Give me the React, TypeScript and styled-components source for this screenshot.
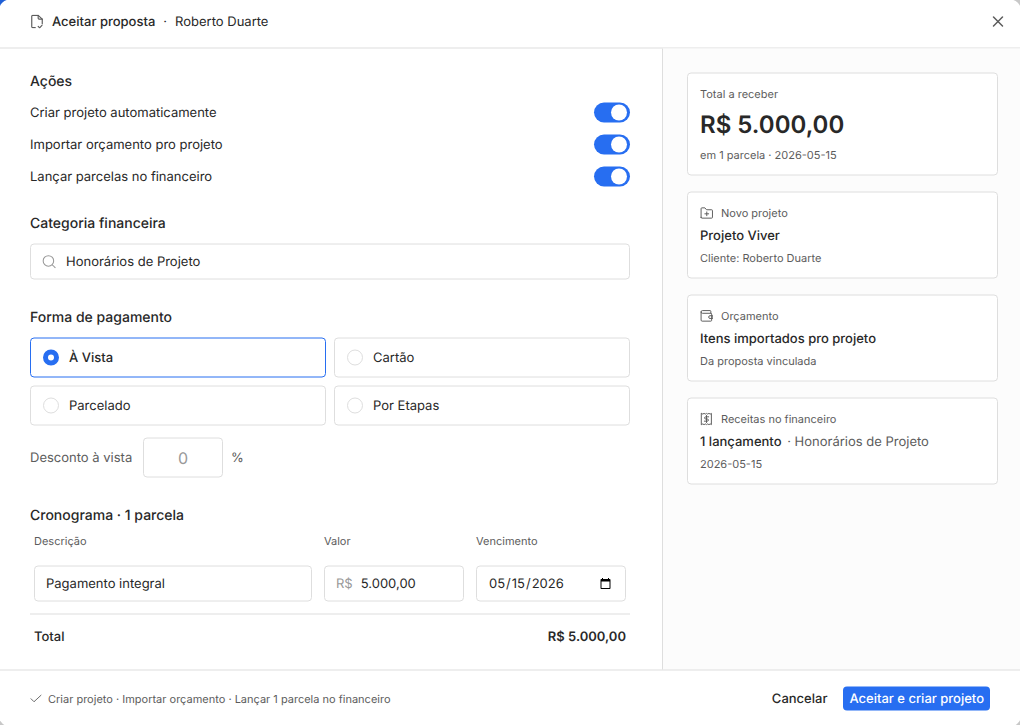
import React, { useState } from "react";
import styled, { createGlobalStyle } from "styled-components";

const color = {
  text: "#282828",
  muted: "#5c5c5c",
  faint: "#999999",
  line: "#dedede",
  panel: "#fcfcfc",
  accent: "#276ef1",
};

const GlobalStyle = createGlobalStyle`
  *, *::before, *::after { box-sizing: border-box; }
  body {
    margin: 0;
    background: #cccccc;
    color: ${color.text};
    font-family: Inter, "Liberation Sans", sans-serif;
    font-size: 13px;
    line-height: 20px;
    text-rendering: geometricPrecision;
  }
  h1, h2, p { margin: 0; font: inherit; }
  button, input { font: inherit; color: inherit; text-rendering: inherit; }
`;

const Backdrop = styled.div`
  position: fixed;
  inset: 0;
  background: linear-gradient(135deg, #1f5fd6 0 24px, #c8c8c8 24px);
`;

const Dialog = styled.form`
  position: fixed;
  top: 50%;
  left: 50%;
  transform: translate(-50%, -50%);
  width: 100vw;
  height: 100vh;
  display: flex;
  flex-direction: column;
  overflow: hidden;
  background: #ffffff;
  border-radius: 10px;
  box-shadow: 0 0 0 1px #ffffff;
`;

const Header = styled.header`
  flex: none;
  display: flex;
  align-items: center;
  gap: 8px;
  height: 48px;
  padding: 0 9px 4px 30px;
  border-bottom: 1px solid ${color.line};
`;

const Title = styled.h1`
  font-weight: 500;
`;

const CloseButton = styled.button`
  display: flex;
  margin-left: auto;
  padding: 4px;
  border: 0;
  background: none;
  color: ${color.muted};
  cursor: pointer;
`;

const Body = styled.div`
  flex: 1;
  min-height: 0;
  display: grid;
  grid-template-columns: minmax(0, 1fr) 358px;
`;

const Main = styled.main`
  padding: 22px 32px 8px 30px;
  overflow: auto;
`;

const Section = styled.section<{ $gap: number }>`
  margin-bottom: ${(p) => p.$gap}px;
`;

const Heading = styled.h2<{ $gap?: number }>`
  display: block;
  margin-bottom: ${(p) => p.$gap ?? 0}px;
  font-size: 14px;
  font-weight: 500;
  line-height: 22px;
`;

const SwitchRow = styled.label`
  display: flex;
  align-items: center;
  justify-content: space-between;
  height: 32px;
  cursor: pointer;
`;

const Switch = styled.input`
  appearance: none;
  width: 36px;
  height: 20px;
  margin: 0;
  padding: 2px;
  border-radius: 10px;
  background: #d0d0d0;
  cursor: pointer;

  &::before {
    content: "";
    display: block;
    width: 16px;
    height: 16px;
    border-radius: 50%;
    background: #ffffff;
  }
  &:checked { background: ${color.accent}; }
  &:checked::before { margin-left: 15px; }
`;

const Field = styled.div`
  display: flex;
  align-items: center;
  height: 36px;
  padding: 0 11px;
  border: 1px solid ${color.line};
  border-radius: 4px;
  color: ${color.faint};
`;

const FieldInput = styled.input<{ $indent?: number }>`
  flex: 1;
  min-width: 0;
  margin: 0 0 0 ${(p) => p.$indent ?? 0}px;
  padding: 0;
  border: 0;
  outline: 0;
  background: none;
  color: ${color.text};
`;

const Options = styled.div`
  display: grid;
  grid-template-columns: 1fr 1fr;
  gap: 8px;
`;

const Option = styled.label`
  display: flex;
  align-items: center;
  gap: 10px;
  height: 40px;
  padding: 0 12px;
  border: 1px solid ${color.line};
  border-radius: 4px;
  cursor: pointer;

  &:has(input:checked) {
    border-color: ${color.accent};
    font-weight: 500;
  }
`;

const Radio = styled.input`
  appearance: none;
  width: 16px;
  height: 16px;
  margin: 0;
  border: 1px solid ${color.line};
  border-radius: 50%;
  background: #ffffff;

  &:checked { border: 5px solid ${color.accent}; }
`;

const Discount = styled.div`
  display: flex;
  align-items: center;
  gap: 8px;
  margin-top: 12px;
  color: ${color.muted};
`;

const DiscountLabel = styled.label`
  min-width: 105px;
`;

const DiscountInput = styled.input`
  width: 80px;
  height: 40px;
  padding: 0 8px;
  border: 1px solid ${color.line};
  border-radius: 4px;
  font-size: 16px;
  text-align: center;

  &::placeholder { color: ${color.faint}; }
`;

const Schedule = styled.table`
  width: 100%;
  table-layout: fixed;
  border-collapse: collapse;

  th, td {
    padding: 0 12px 0 0;
    text-align: left;
  }
  th:first-child, td:first-child { padding-left: 4px; }
  th:last-child, td:last-child { padding-right: 4px; }
  thead th {
    height: 28px;
    color: ${color.muted};
    font-size: 11px;
    font-weight: 400;
  }
  tbody td { height: 60px; }
  tfoot tr { border-top: 1px solid ${color.line}; }
  tfoot th { height: 44px; font-weight: 500; }
  tfoot td { font-weight: 600; text-align: right; }
`;

const Column = styled.col<{ $width?: number }>`
  width: ${(p) => (p.$width ? `${p.$width}px` : "auto")};
`;

const Aside = styled.aside`
  display: flex;
  flex-direction: column;
  gap: 16px;
  padding: 24px 22px 24px 24px;
  border-left: 1px solid ${color.line};
  background: ${color.panel};
  overflow: auto;
`;

const Card = styled.section`
  padding: 12px;
  border: 1px solid ${color.line};
  border-radius: 4px;
  background: #ffffff;
`;

const CardLabel = styled.h2`
  display: flex;
  align-items: center;
  gap: 8px;
  height: 17px;
  color: ${color.muted};
  font-size: 11px;
`;

const Amount = styled.p`
  padding: 4px 0;
  font-size: 24px;
  font-weight: 600;
  line-height: 36px;
`;

const CardValue = styled.p`
  padding: 4px 0;
  color: ${color.muted};

  strong {
    margin-right: 2px;
    color: ${color.text};
    font-weight: 500;
  }
`;

const CardNote = styled.p`
  color: ${color.muted};
  font-size: 11px;
  line-height: 16px;
`;

const Footer = styled.footer`
  flex: none;
  display: flex;
  align-items: center;
  gap: 4px;
  height: 56px;
  padding: 2px 30px 0;
  border-top: 1px solid ${color.line};
`;

const Summary = styled.p`
  display: flex;
  align-items: center;
  gap: 6px;
  margin-right: auto;
  color: ${color.muted};
  font-size: 11px;
`;

const Button = styled.button<{ $primary?: boolean }>`
  height: 24px;
  margin-left: ${(p) => (p.$primary ? 6 : 0)}px;
  padding: 0 6px;
  border: 0;
  border-radius: 4px;
  background: ${(p) => (p.$primary ? color.accent : "transparent")};
  color: ${(p) => (p.$primary ? "#ffffff" : color.text)};
  font-weight: 500;
  cursor: pointer;
`;

const Svg = styled.svg.attrs({
  viewBox: "0 0 24 24",
  fill: "none",
  stroke: "currentColor",
  strokeLinecap: "round",
  strokeLinejoin: "round",
  "aria-hidden": true,
})<{ $size: number; $color?: string; $weight?: number }>`
  flex: none;
  width: ${(p) => p.$size}px;
  height: ${(p) => p.$size}px;
  color: ${(p) => p.$color ?? "inherit"};
  stroke-width: ${(p) => p.$weight ?? 1.8};
`;

const FileCheckIcon = () => (
  <Svg $size={14} $color={color.muted} $weight={2}>
    <path d="M9 22.500H4.500A1.500 1.500 0 0 1 3 21V3a1.500 1.500 0 0 1 1.500-1.500H14L21 8v8" />
    <path d="M14 1.500V6.500A1.500 1.500 0 0 0 15.500 8H21" />
    <path d="m14 20.500 2.500 2.500 4-4.500" />
  </Svg>
);

const CloseIcon = () => (
  <Svg $size={18} $weight={2}>
    <path d="m6 6 12 12M18 6 6 18" />
  </Svg>
);

const SearchIcon = () => (
  <Svg $size={14}>
    <circle cx="11" cy="11" r="9" />
    <path d="m18 18 4.500 4.500" />
  </Svg>
);

const FolderPlusIcon = () => (
  <Svg $size={13}>
    <path d="M2 20V4a1.500 1.500 0 0 1 1.500-1.500H9L12 6h9.500A1.500 1.500 0 0 1 23 7.500V20a1.500 1.500 0 0 1-1.500 1.500h-18A1.500 1.500 0 0 1 2 20Z" />
    <path d="M12.500 10v7M9 13.500h7" />
  </Svg>
);

const WalletIcon = () => (
  <Svg $size={13}>
    <path d="M20 7V3.500A1.500 1.500 0 0 0 18.500 2H4.500a2.500 2.500 0 0 0 0 5H20a1.500 1.500 0 0 1 1.500 1.500V20a1.500 1.500 0 0 1-1.500 1.500H4A2 2 0 0 1 2 19.500v-15" />
    <path d="M23 11.500h-4.500a2.500 2.500 0 0 0 0 5H23Z" />
  </Svg>
);

const ReceiptIcon = () => (
  <Svg $size={13}>
    <path d="M3 1.500 5.200 3l2.300-1.500L9.700 3 12 1.500 14.300 3l2.200-1.500L18.800 3 21 1.500v21L18.800 21l-2.300 1.500-2.200-1.500-2.300 1.500L9.700 21l-2.200 1.500L5.200 21 3 22.500Z" />
    <path d="M16 8h-5.500a2 2 0 0 0 0 4h3a2 2 0 0 1 0 4H8M12 5.500v13" />
  </Svg>
);

const CheckIcon = () => (
  <Svg $size={12} $color={color.muted}>
    <path d="m2 12.500 6 6L22 5.500" />
  </Svg>
);

const actions = [
  "Criar projeto automaticamente",
  "Importar orçamento pro projeto",
  "Lançar parcelas no financeiro",
];

const methods = ["À Vista", "Cartão", "Parcelado", "Por Etapas"];

export default function App() {
  const [method, setMethod] = useState(methods[0]);

  return (
    <>
      <GlobalStyle />
      <Backdrop />
      <Dialog role="dialog" aria-labelledby="dialog-title" onSubmit={(e) => e.preventDefault()}>
        <Header>
          <FileCheckIcon />
          <Title id="dialog-title">Aceitar proposta</Title>
          <span>·</span>
          <span>Roberto Duarte</span>
          <CloseButton type="button" aria-label="Fechar">
            <CloseIcon />
          </CloseButton>
        </Header>

        <Body>
          <Main>
            <Section $gap={20}>
              <Heading $gap={4}>Ações</Heading>
              {actions.map((label) => (
                <SwitchRow key={label}>
                  {label}
                  <Switch type="checkbox" role="switch" defaultChecked />
                </SwitchRow>
              ))}
            </Section>

            <Section $gap={27}>
              <Heading as="label" htmlFor="category" $gap={9}>
                Categoria financeira
              </Heading>
              <Field>
                <SearchIcon />
                <FieldInput id="category" $indent={10} defaultValue="Honorários de Projeto" />
              </Field>
            </Section>

            <Section $gap={27}>
              <Heading $gap={9}>Forma de pagamento</Heading>
              <Options>
                {methods.map((name) => (
                  <Option key={name}>
                    <Radio
                      type="radio"
                      name="method"
                      checked={method === name}
                      onChange={() => setMethod(name)}
                    />
                    {name}
                  </Option>
                ))}
              </Options>
              <Discount>
                <DiscountLabel htmlFor="discount">Desconto à vista</DiscountLabel>
                <DiscountInput id="discount" placeholder="0" />
                <span>%</span>
              </Discount>
            </Section>

            <section>
              <Heading>Cronograma · 1 parcela</Heading>
              <Schedule>
                <colgroup>
                  <Column />
                  <Column $width={152} />
                  <Column $width={154} />
                </colgroup>
                <thead>
                  <tr>
                    <th>Descrição</th>
                    <th>Valor</th>
                    <th>Vencimento</th>
                  </tr>
                </thead>
                <tbody>
                  <tr>
                    <td>
                      <Field>
                        <FieldInput aria-label="Descrição" defaultValue="Pagamento integral" />
                      </Field>
                    </td>
                    <td>
                      <Field>
                        R$
                        <FieldInput aria-label="Valor" $indent={8} defaultValue="5.000,00" />
                      </Field>
                    </td>
                    <td>
                      <Field>
                        <FieldInput type="date" aria-label="Vencimento" defaultValue="2026-05-15" />
                      </Field>
                    </td>
                  </tr>
                </tbody>
                <tfoot>
                  <tr>
                    <th colSpan={2}>Total</th>
                    <td>R$ 5.000,00</td>
                  </tr>
                </tfoot>
              </Schedule>
            </section>
          </Main>

          <Aside>
            <Card>
              <CardLabel>Total a receber</CardLabel>
              <Amount>R$ 5.000,00</Amount>
              <CardNote>em 1 parcela · 2026-05-15</CardNote>
            </Card>
            <Card>
              <CardLabel>
                <FolderPlusIcon />
                Novo projeto
              </CardLabel>
              <CardValue>
                <strong>Projeto Viver</strong>
              </CardValue>
              <CardNote>Cliente: Roberto Duarte</CardNote>
            </Card>
            <Card>
              <CardLabel>
                <WalletIcon />
                Orçamento
              </CardLabel>
              <CardValue>
                <strong>Itens importados pro projeto</strong>
              </CardValue>
              <CardNote>Da proposta vinculada</CardNote>
            </Card>
            <Card>
              <CardLabel>
                <ReceiptIcon />
                Receitas no financeiro
              </CardLabel>
              <CardValue>
                <strong>1 lançamento</strong> · Honorários de Projeto
              </CardValue>
              <CardNote>2026-05-15</CardNote>
            </Card>
          </Aside>
        </Body>

        <Footer>
          <Summary>
            <CheckIcon />
            Criar projeto · Importar orçamento · Lançar 1 parcela no financeiro
          </Summary>
          <Button type="button">Cancelar</Button>
          <Button type="submit" $primary>
            Aceitar e criar projeto
          </Button>
        </Footer>
      </Dialog>
    </>
  );
}
